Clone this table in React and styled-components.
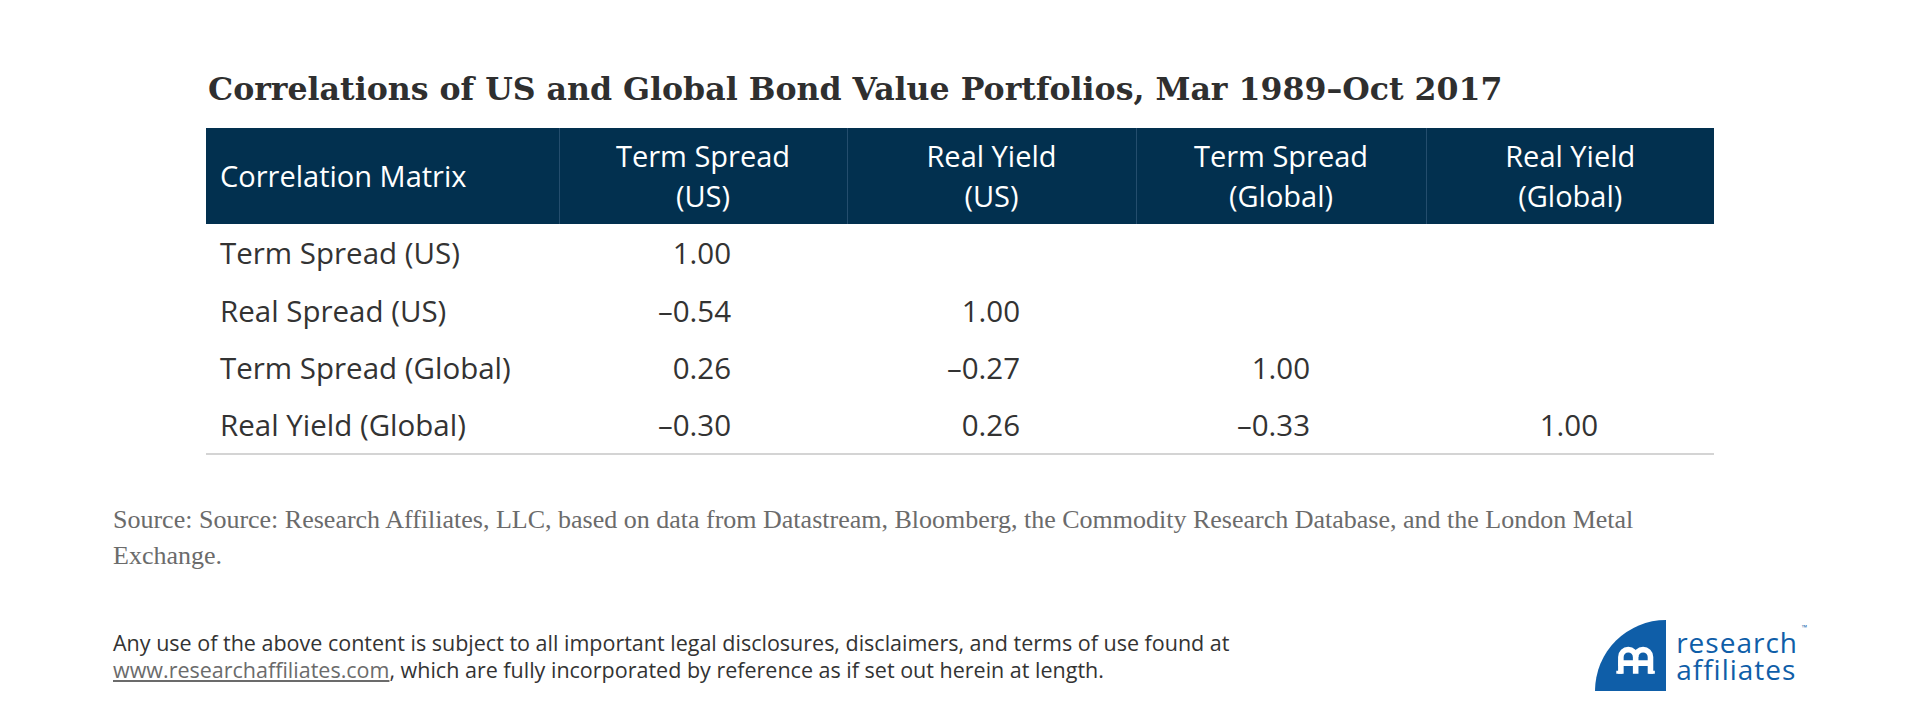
import React from "react";
import styled, { createGlobalStyle } from "styled-components";

const GlobalStyle = createGlobalStyle`
  html, body {
    margin: 0;
    padding: 0;
    background: #ffffff;
  }
`;

const Page = styled.div`
  width: 1920px;
  height: 718px;
  overflow: hidden;
  background: #ffffff;
`;

const Exhibit = styled.section`
  margin-left: 206px;
  width: 1508px;
  padding-top: 69px;
`;

const Title = styled.h2`
  margin: 0 0 19px 2px;
  font-family: "DejaVu Serif", "Liberation Serif", serif;
  font-weight: 700;
  font-size: 31.6px;
  line-height: 40px;
  color: #2f2f2f;
  white-space: nowrap;
`;

const Table = styled.table`
  width: 1508px;
  border-collapse: collapse;
  table-layout: fixed;
  font-family: "Open Sans", "Noto Sans", sans-serif;
  border-bottom: 2px solid #d4d4d4;
`;

const HeadRow = styled.tr`
  background: #02304f;
  height: 96px;
`;

const HeadCell = styled.th`
  padding: 8px 10px;
  font-weight: 400;
  font-size: 29px;
  line-height: 40px;
  color: #ffffff;
  text-align: ${(p) => (p.$first ? "left" : "center")};
  padding-left: ${(p) => (p.$first ? "14px" : "10px")};
  border-left: ${(p) => (p.$first ? "none" : "1px solid #244d6d")};
  white-space: nowrap;
`;

const BodyRow = styled.tr`
  height: 57.5px;
`;

const LabelCell = styled.td`
  padding: 0 0 0 14px;
  font-size: 29.5px;
  color: #333333;
  white-space: nowrap;
`;

const ValueCell = styled.td`
  padding: 0 116px 0 0;
  font-size: 29.5px;
  color: #333333;
  text-align: right;
  white-space: nowrap;
`;

const Source = styled.p`
  margin: 47px 0 0 113px;
  width: 1560px;
  font-family: "Liberation Serif", "Times New Roman", serif;
  font-size: 26px;
  line-height: 36px;
  color: #6b6b6b;
`;

const Footer = styled.footer`
  display: flex;
  justify-content: space-between;
  align-items: center;
  margin-top: 46px;
  padding: 0 122px 0 113px;
`;

const Legal = styled.p`
  margin: 0;
  font-family: "Open Sans", "Noto Sans", sans-serif;
  font-size: 21.5px;
  line-height: 27px;
  color: #333333;
`;

const Link = styled.a`
  color: #6b6b6b;
  text-decoration: underline;
`;

const Logo = styled.div`
  display: flex;
  align-items: center;
  gap: 10px;
`;

const Wordmark = styled.div`
  position: relative;
  font-family: "Open Sans", "Noto Sans", sans-serif;
  font-size: 28px;
  line-height: 27px;
  color: #0f5ea8;
  letter-spacing: 1px;
`;

const Tm = styled.span`
  position: absolute;
  top: -5px;
  right: -9px;
  font-size: 7px;
  line-height: 7px;
  letter-spacing: 0;
`;

const columns = [
  ["Term Spread", "(US)"],
  ["Real Yield", "(US)"],
  ["Term Spread", "(Global)"],
  ["Real Yield", "(Global)"],
];

const rows = [
  { label: "Term Spread (US)", values: ["1.00", "", "", ""] },
  { label: "Real Spread (US)", values: ["–0.54", "1.00", "", ""] },
  { label: "Term Spread (Global)", values: ["0.26", "–0.27", "1.00", ""] },
  { label: "Real Yield (Global)", values: ["–0.30", "0.26", "–0.33", "1.00"] },
];

const LogoMark = () => (
  <svg width="71" height="71" viewBox="0 0 70 70">
    <path d="M70 0 V70 H0 A70 70 0 0 1 70 0 Z" fill="#0f5ea8" />
    <g fill="none" stroke="#ffffff" strokeWidth="5.5">
      <path d="M25.5 53 V36.5 A7.3 7.3 0 0 1 40.1 36.5 V53" />
      <path d="M40.1 36.5 A7.3 7.3 0 0 1 54.7 36.5 V53" />
      <path d="M23 42.5 H57" />
    </g>
    <path d="M21 50 H27 V53 H21 Z M53 50 H59 V53 H53 Z" fill="#ffffff" />
  </svg>
);

const App = () => {
  return (
    <Page>
      <GlobalStyle />
      <Exhibit>
        <Title>Correlations of US and Global Bond Value Portfolios, Mar 1989–Oct 2017</Title>
        <Table>
          <colgroup>
            <col style={{ width: "353px" }} />
            <col style={{ width: "288px" }} />
            <col style={{ width: "289px" }} />
            <col style={{ width: "290px" }} />
            <col style={{ width: "288px" }} />
          </colgroup>
          <thead>
            <HeadRow>
              <HeadCell $first>Correlation Matrix</HeadCell>
              {columns.map(([a, b], i) => (
                <HeadCell key={i}>
                  {a}
                  <br />
                  {b}
                </HeadCell>
              ))}
            </HeadRow>
          </thead>
          <tbody>
            {rows.map((r) => (
              <BodyRow key={r.label}>
                <LabelCell>{r.label}</LabelCell>
                {r.values.map((v, i) => (
                  <ValueCell key={i}>{v}</ValueCell>
                ))}
              </BodyRow>
            ))}
          </tbody>
        </Table>
      </Exhibit>
      <Source>
        Source: Source: Research Affiliates, LLC, based on data from&nbsp;Datastream, Bloomberg, the Commodity Research Database, and the London Metal Exchange.
      </Source>
      <Footer>
        <Legal>
          Any use of the above content is subject to all important legal disclosures, disclaimers, and terms of use found at
          <br />
          <Link href="#">www.researchaffiliates.com</Link>, which are fully incorporated by reference as if set out herein at length.
        </Legal>
        <Logo>
          <LogoMark />
          <Wordmark>
            research
            <br />
            affiliates
            <Tm>™</Tm>
          </Wordmark>
        </Logo>
      </Footer>
    </Page>
  );
};

export default App;
